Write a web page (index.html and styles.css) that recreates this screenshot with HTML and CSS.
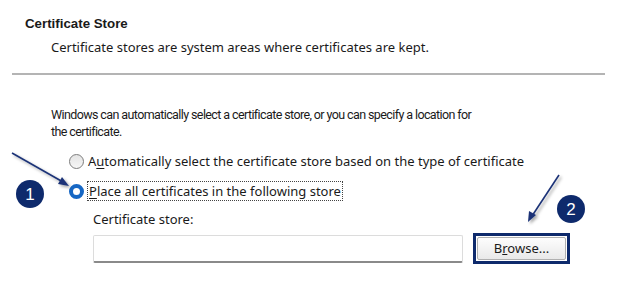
FILE: index.html
```html
<!DOCTYPE html>
<html lang="en">
<head>
    <meta charset="UTF-8">
    <meta name="viewport" content="width=device-width, initial-scale=1.0">
    <title>Certificate Store</title>
    <link rel="stylesheet" href="styles.css">
</head>
<body>
    <div class="page">
        <div class="head">
            <div class="title">Certificate Store</div>
            <div class="subtitle">Certificate stores are system areas where certificates are kept.</div>
        </div>
        <div class="rule"></div>
        <div class="content">
            <p class="intro">Windows can automatically select a certificate store, or you can specify a location for the certificate.</p>
            <div class="options">
                <label class="option">
                    <span class="radio"></span>
                    <span class="label">A<u>u</u>tomatically select the certificate store based on the type of certificate</span>
                </label>
                <label class="option">
                    <span class="radio checked"></span>
                    <span class="label focus"><u>P</u>lace all certificates in the following store</span>
                </label>
            </div>
            <div class="store">
                <div class="store-label">Certificate store:</div>
                <div class="store-row">
                    <div class="field"></div>
                    <div class="highlight">
                        <div class="button">B<u>r</u>owse...</div>
                    </div>
                </div>
            </div>
        </div>

        <svg class="marks" width="624" height="297" viewBox="0 0 624 297">
            <defs>
                <filter id="shadow" x="-20%" y="-20%" width="140%" height="140%">
                    <feDropShadow dx="2" dy="2" stdDeviation="1.5" flood-color="#000" flood-opacity="0.35"/>
                </filter>
            </defs>
            <g filter="url(#shadow)" stroke="#1b3377" stroke-width="1.6" fill="#1b3377">
                <line x1="12" y1="153" x2="63" y2="182"/>
                <polygon points="69,186 58,184 62,177" stroke="none"/>
                <line x1="559" y1="175" x2="532" y2="216"/>
                <polygon points="528,222 529,211 536,215" stroke="none"/>
            </g>
            <circle cx="30" cy="194" r="14" fill="#0e2a6c"/>
            <text x="30" y="200" class="num">1</text>
            <circle cx="571" cy="209" r="14" fill="#0e2a6c"/>
            <text x="571" y="215" class="num">2</text>
        </svg>
    </div>
</body>
</html>
```

FILE: styles.css
```css
body{
    margin: 0;
    background: #fff;
    font-family: "Noto Sans", "Open Sans", sans-serif;
    color: #1a1a1a;
}

.page{
    position: relative;
    width: 624px;
    height: 297px;
    overflow: hidden;
}

.head{
    padding: 16px 0 0 25px;
}
.title{
    font-family: "Liberation Sans", Arial, sans-serif;
    font-weight: bold;
    font-size: 13.3px;
    line-height: 16px;
}
.subtitle{
    margin: 6px 0 0 26px;
    font-size: 13px;
    line-height: 18px;
}

.rule{
    height: 2px;
    margin: 17px 19px 0 12px;
    background: #b4b4b4;
}

.content{
    padding: 0 0 0 51px;
}
.intro{
    margin: 31px 0 0;
    width: 428px;
    font-family: Roboto, "Noto Sans", sans-serif;
    font-size: 12.5px;
    letter-spacing: -0.6px;
    line-height: 17px;
}

.options{
    display: flex;
    flex-direction: column;
    gap: 12px;
    margin: 12px 0 0 18px;
}
.option{
    display: flex;
    align-items: center;
    gap: 4px;
    font-size: 13px;
    line-height: 18px;
}
.radio{
    width: 13px;
    height: 13px;
    border: 1px solid #7d7d7d;
    border-radius: 50%;
    background: linear-gradient(#e4e4e4, #f6f6f6);
}
.radio.checked{
    width: 7px;
    height: 7px;
    border: 4px solid #1667c4;
    background: #fff;
}
.label u{
    text-decoration-thickness: 1px;
    text-underline-offset: 2px;
}
.focus{
    outline: 1px dotted #444;
    outline-offset: 0;
    padding: 0 1px;
}

.store{
    margin: 10px 0 0 42px;
}
.store-label{
    font-size: 13px;
    line-height: 18px;
}
.store-row{
    display: flex;
    align-items: center;
    gap: 10px;
    margin-top: 5px;
}
.field{
    width: 368px;
    height: 25px;
    border: 1px solid #dcdcdc;
    border-bottom: 2px solid #8a8a8a;
    border-radius: 2px;
    background: #fff;
}
.highlight{
    border: 3px solid #0e2a6c;
    padding: 1px;
}
.button{
    width: 87px;
    height: 21px;
    border: 1px solid #b0b0b0;
    border-radius: 2px;
    background: linear-gradient(#fdfdfd, #e9e9e9);
    font-size: 13px;
    line-height: 21px;
    text-align: center;
}

.marks{
    position: absolute;
    left: 0;
    top: 0;
}
.num{
    font-family: "Liberation Sans", Arial, sans-serif;
    font-size: 17px;
    fill: #fff;
    text-anchor: middle;
}
```
